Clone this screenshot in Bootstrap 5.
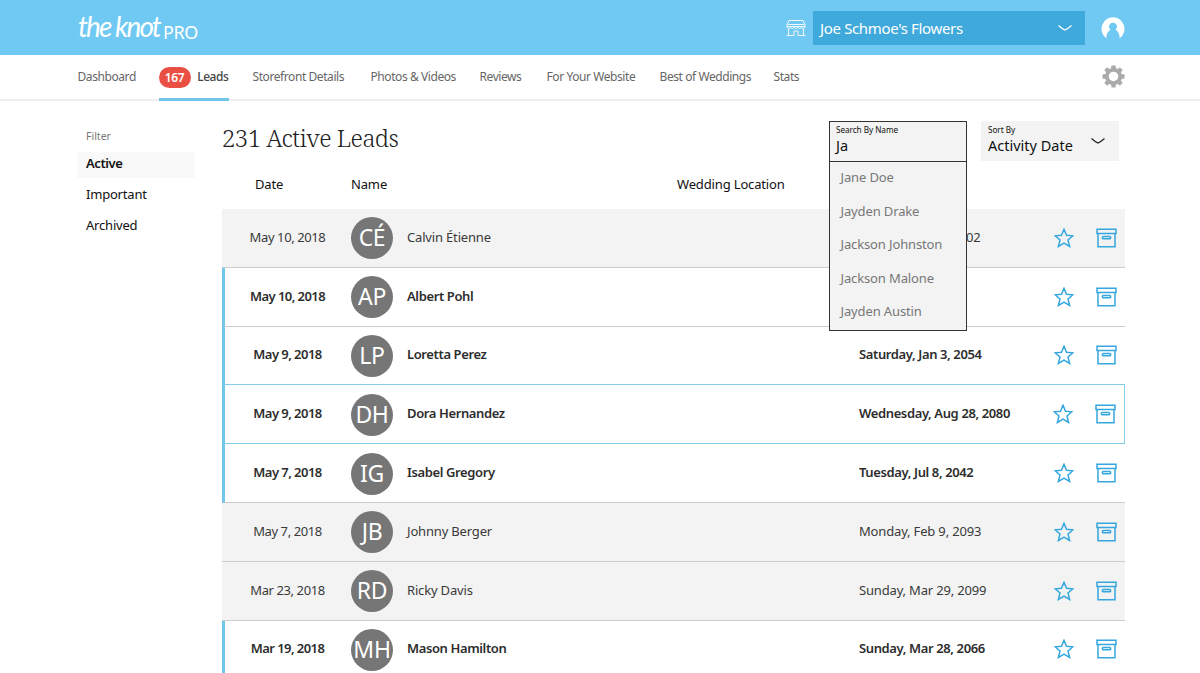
<!DOCTYPE html>
<html lang="en">
<head>
<meta charset="utf-8">
<meta name="viewport" content="width=device-width, initial-scale=1">
<title>The Knot Pro – Leads</title>
<link href="https://cdn.jsdelivr.net/npm/bootstrap@5.3.0/dist/css/bootstrap.min.css" rel="stylesheet">
<style>
body{font-family:"Noto Sans",sans-serif;font-size:13px;line-height:20px;color:#3a3a3a;height:673px;overflow:hidden;background:#fff}
.page-wrap{padding-left:77px;padding-right:75px}
.topbar{height:55px;background:#70c9f2;color:#fff}
.brand-script{font:italic 400 28px/36px "Lato",sans-serif;letter-spacing:-1.9px;width:86px;padding-left:1px;padding-bottom:3px;white-space:nowrap}
.brand-pro{font:400 18px/24px "Noto Sans",sans-serif;letter-spacing:-.4px;padding-top:8px}
.store-select{width:272px;height:34px;background:#3fa9dc;font-size:15px;letter-spacing:-.35px;margin-left:7px;margin-right:16px;padding:0 12px 0 7px}
.mainnav{height:46px;border-bottom:2px solid #eee;font-size:12px;color:#666}
.nav-grid{display:grid;grid-template-columns:57px 70px 94px 85px 43px 89px 90px 27px;column-gap:24px;height:46px;letter-spacing:-.42px;white-space:nowrap;margin-left:.5px}
.nav-grid a{color:#666;text-decoration:none;line-height:43px}
.nav-grid .current{color:#444;font-weight:500;border-bottom:3px solid #70c5ea;display:flex;justify-content:space-between;align-items:center;height:46px}
.count-pill{background:#e94f42;color:#fff;border-radius:11px;width:32px;height:21px;line-height:21px;text-align:center;font-weight:600;margin-top:1px}
.side{width:118px;color:#111;font-size:13px}
.side small{font-size:10.5px;color:#777;line-height:16px;margin:27px 0 8px 9px}
.side a{color:#111;text-decoration:none;height:26px;line-height:23px;padding-left:9px;margin-bottom:5px;letter-spacing:-.2px}
.side .on{background:#f9f9f9;font-weight:600;letter-spacing:-.4px}
.leads{width:903px;margin-left:27px}
.headline{height:64px;padding-top:20px}
.headline h1{font:300 24px/34px "Noto Serif","DejaVu Serif",serif;letter-spacing:-.55px;color:#222;margin:0}
.tool{width:138px;height:40px;background:#f3f3f3;color:#111}
.tool-label{font-size:8.2px;line-height:12px;letter-spacing:-.05px}
.tool-value{font-size:14.5px;line-height:18px}
.search-tool{border:1px solid #333;padding:2px 6px;margin-right:14px;height:41px}
.sort-tool{margin-right:6px;padding:0 13px 4px 7px}
.suggest{position:absolute;left:-1px;top:39px;width:138px;height:170px;border:1px solid #333;background:#f3f3f3;z-index:5;color:#777;padding-left:10.500px;font-size:13px;letter-spacing:-.13px;line-height:33.6px}
.suggest div{margin-top:-1px;margin-bottom:1px}
.lead-row{display:grid;grid-template-columns:126px 56px 270px 182px 195px 42px 28px;align-items:center;height:58.8px;border-bottom:1px solid #ccc;padding-left:3px;white-space:nowrap}
.lead-row>span:not(.initials){padding-bottom:2px}
.col-heads{height:44px;border:0;color:#111;padding-bottom:4px;letter-spacing:-.15px}
.seen{background:#f3f3f3;letter-spacing:-.17px}
.seen .date-cell{letter-spacing:-.4px}
.unread{font-weight:600;color:#2d2d2d;padding-left:0;border-left:3px solid #70c5ea;letter-spacing:-.38px}
.unread .date-cell{letter-spacing:-.55px}
.hovered{border-bottom-color:#84cbea;box-shadow:inset -1px 0 #84cbea,0 -1px #84cbea}
.hovered svg{margin-left:-1px}
.date-cell{text-align:center;padding-right:1px}
.initials{width:42px;height:42px;border-radius:50%;background:#767676;color:#fff;font:400 23px/41px "Noto Sans",sans-serif;letter-spacing:-.3px;text-align:center;overflow:hidden;margin-top:1px}
.cut{padding-left:107px}
.date-head{padding-left:30px}
</style>
<script src="https://cdn.jsdelivr.net/npm/bootstrap@5.3.0/dist/js/bootstrap.bundle.min.js"></script>
</head>
<body>
<svg width="0" height="0" class="position-absolute"><defs>
<symbol id="star" viewBox="0 0 20 20"><path d="M10 1.300 12.500 7.300 18.900 7.800 14 12 15.600 18.500 10 15.100 4.400 18.500 6 12 1.100 7.800 7.500 7.300Z" fill="none" stroke="#35a7de" stroke-width="1.500"/></symbol>
<symbol id="archive" viewBox="0 0 21 20"><path d="M1 1.200h19v4.300H1zM2 5.500h17V18.800H2zM7.400 8.500h6.200a.9.9 0 0 1 0 2.200H7.400a.9.9 0 0 1 0-2.200z" fill="none" stroke="#35a7de" stroke-width="1.500"/></symbol>
</defs></svg>
<header class="topbar page-wrap d-flex align-items-center">
  <div class="d-flex align-items-center me-auto"><span class="brand-script">the knot</span><span class="brand-pro">PRO</span></div>
  <svg width="20" height="18" viewBox="0 0 20 18" fill="none" stroke="#fff" stroke-width=".9"><path d="M3 1.500h14l2 4v2H1v-2zM1.500 5.500h17M1 7.500c0 2.700 3.600 2.700 3.600 0 0 2.700 3.600 2.700 3.600 0 0 2.700 3.600 2.700 3.600 0 0 2.700 3.600 2.700 3.600 0 0 2.700 3.600 2.700 3.600 0M2.500 10v6.500M17.500 16.500V10M8 16.500V12h4v4.500M.5 16.500H8M12 16.500h7.500"/></svg>
  <div class="store-select d-flex align-items-center justify-content-between"><span>Joe Schmoe's Flowers</span><svg width="16" height="8" fill="none" stroke="#fff" stroke-width="1.300"><path d="M1.500 1.500q5.500 4.500 6.500 4.500t6.500-4.500"/></svg></div>
  <svg width="24" height="24" viewBox="0 0 24 24"><path d="M5.300 22.200A11.500 11.500 0 1 1 18.700 22.200C18.500 17.500 17 15 14.500 13.800A4 4 0 1 0 9.500 13.800C7 15 5.500 17.500 5.300 22.200Z" fill="#fff"/><circle cx="12" cy="10.500" r="3.300" fill="#70c9f2"/></svg>
</header>
<nav class="mainnav page-wrap d-flex justify-content-between">
  <div class="nav-grid"><a>Dashboard</a><a class="current"><span class="count-pill">167</span><span>Leads</span></a><a>Storefront Details</a><a>Photos &amp; Videos</a><a>Reviews</a><a>For Your Website</a><a>Best of Weddings</a><a>Stats</a></div>
  <svg class="mt-2" width="23" height="26" viewBox="-12 -13.500 24 26"><g fill="#aaa"><g id="teeth"><rect x="-2.300" y="-11.500" width="4.600" height="23" rx=".8"/><rect x="-11.500" y="-2.300" width="23" height="4.600" rx=".8"/></g><use href="#teeth" transform="rotate(45)"/></g><circle r="7" fill="none" stroke="#aaa" stroke-width="4"/><circle r="5" fill="#fff"/></svg>
</nav>
<main class="page-wrap d-flex">
  <aside class="side d-flex flex-column"><small>Filter</small><a class="on">Active</a><a>Important</a><a>Archived</a></aside>
  <section class="leads">
    <div class="headline d-flex"><h1 class="me-auto">231 Active Leads</h1>
      <div class="tool search-tool position-relative"><div class="tool-label">Search By Name</div><div class="tool-value">Ja</div>
        <div class="suggest"><div>Jane Doe</div><div>Jayden Drake</div><div>Jackson Johnston</div><div>Jackson Malone</div><div>Jayden Austin</div></div></div>
      <div class="tool sort-tool d-flex align-items-center justify-content-between"><div><div class="tool-label">Sort By</div><div class="tool-value">Activity Date</div></div><svg class="mt-1" width="16" height="8" fill="none" stroke="#222" stroke-width="1.300"><path d="M1.500 1.500q5.500 4.500 6.500 4.500t6.500-4.500"/></svg></div>
    </div>
    <div class="lead-row col-heads"><span class="date-head">Date</span><span>Name</span><span></span><span>Wedding Location</span></div>
    <div id="rows"></div>
  </section>
</main>
<script>
const leads=[
["May 10, 2018","CÉ","Calvin Étienne","02","seen"],
["May 10, 2018","AP","Albert Pohl","","unread"],
["May 9, 2018","LP","Loretta Perez","Saturday, Jan 3, 2054","unread"],
["May 9, 2018","DH","Dora Hernandez","Wednesday, Aug 28, 2080","unread hovered"],
["May 7, 2018","IG","Isabel Gregory","Tuesday, Jul 8, 2042","unread"],
["May 7, 2018","JB","Johnny Berger","Monday, Feb 9, 2093","seen"],
["Mar 23, 2018","RD","Ricky Davis","Sunday, Mar 29, 2099","seen"],
["Mar 19, 2018","MH","Mason Hamilton","Sunday, Mar 28, 2066","unread"]];
document.getElementById("rows").innerHTML=leads.map(([d,i,n,w,c])=>`<div class="lead-row ${c}"><span class="date-cell">${d}</span><span class="initials">${i}</span><span>${n}</span><span></span><span class="${w==="02"?"cut":""}">${w}</span><svg width="20" height="20"><use href="#star"/></svg><svg width="21" height="20"><use href="#archive"/></svg></div>`).join("");
</script>
</body>
</html>
